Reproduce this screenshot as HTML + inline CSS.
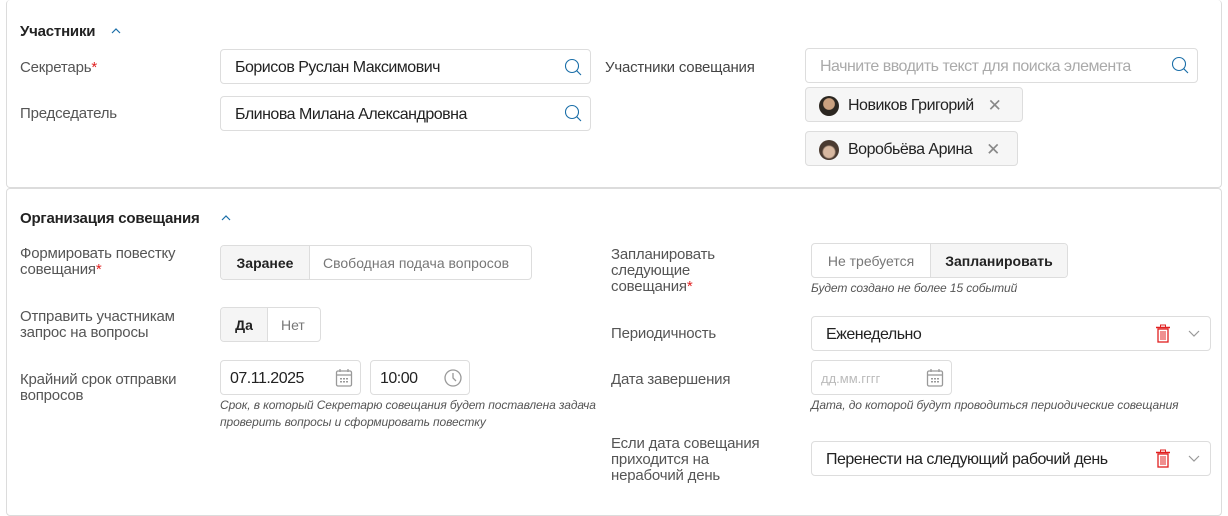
<!DOCTYPE html><html><head><meta charset="utf-8"><style>
*{box-sizing:border-box}body{margin:0;width:1228px;height:516px;background:#fff;font-family:"Liberation Sans",sans-serif;color:#333;position:relative;overflow:hidden}
.p{position:absolute;border:1px solid #dcdcdc;border-radius:4px;background:#fff}
.a{position:absolute;white-space:nowrap}
.l{font-size:15px;color:#555;line-height:16px;letter-spacing:-0.2px}
.h{font-size:15px;font-weight:bold;color:#222;letter-spacing:-0.2px}
.in{position:absolute;border:1px solid #ddd;border-radius:4px;background:#fff;font-size:16px;color:#222;padding-left:14px;padding-top:2px;display:flex;align-items:center;letter-spacing:-0.5px}
.hint{font-size:12px;font-style:italic;color:#555;line-height:17px;letter-spacing:-0.1px}
.seg{position:absolute;border:1px solid #ddd;border-radius:4px;display:flex;font-size:14px;overflow:hidden}
.seg div{display:flex;align-items:center;padding:0 13px;color:#777}
.seg .on{background:#f5f5f5;color:#222;font-weight:bold}
.r{color:#e02020}
.ic{position:absolute}
</style></head><body>
<div class="p" style="left:6px;top:0;width:1216px;height:188px;border-top:none"></div>
<div class="p" style="left:6px;top:188px;width:1216px;height:328px"></div>

<div class="a h" style="left:20px;top:23px">Участники</div>
<svg class="ic" style="left:110px;top:27px" width="12" height="8"><polyline points="2,6 6,2 10,6" fill="none" stroke="#1a6ea8" stroke-width="1.2"/></svg>
<div class="a l" style="left:20px;top:60px">Секретарь<span class="r">*</span></div>
<div class="a l" style="left:20px;top:106px">Председатель</div>
<div class="in" style="left:220px;top:49px;width:371px;height:35px">Борисов Руслан Максимович</div>
<div class="in" style="left:220px;top:96px;width:371px;height:35px">Блинова Милана Александровна</div>
<svg class="ic" style="left:564px;top:58px" width="20" height="20"><circle cx="8" cy="8" r="6.5" fill="none" stroke="#1a6ea8" stroke-width="1.1"/><line x1="12.7" y1="12.7" x2="17" y2="17" stroke="#1a6ea8" stroke-width="1.1"/></svg>
<svg class="ic" style="left:564px;top:104px" width="20" height="20"><circle cx="8" cy="8" r="6.5" fill="none" stroke="#1a6ea8" stroke-width="1.1"/><line x1="12.7" y1="12.7" x2="17" y2="17" stroke="#1a6ea8" stroke-width="1.1"/></svg>

<div class="a l" style="left:605px;top:60px;color:#444">Участники совещания</div>
<div class="in" style="left:805px;top:48px;width:393px;height:35px;color:#aaa">Начните вводить текст для поиска элемента</div>
<svg class="ic" style="left:1171px;top:56px" width="20" height="20"><circle cx="8" cy="8" r="6.5" fill="none" stroke="#1a6ea8" stroke-width="1.1"/><line x1="12.7" y1="12.7" x2="17" y2="17" stroke="#1a6ea8" stroke-width="1.1"/></svg>
<div class="in" style="left:805px;top:87px;width:218px;height:35px;background:#f6f6f6;padding-left:13px"><span style="width:20px;height:20px;border-radius:50%;background:radial-gradient(circle at 50% 40%,#c9a07f 35%,#2b2620 40%);margin-right:9px"></span>Новиков Григорий<span style="margin-left:14px;color:#888;font-size:17px">✕</span></div>
<div class="in" style="left:805px;top:131px;width:213px;height:35px;background:#f6f6f6;padding-left:13px"><span style="width:20px;height:20px;border-radius:50%;background:radial-gradient(circle at 50% 60%,#d8b8a0 35%,#4a3a30 45%);margin-right:9px"></span>Воробьёва Арина<span style="margin-left:14px;color:#888;font-size:17px">✕</span></div>

<div class="a h" style="left:20px;top:210px">Организация совещания</div>
<svg class="ic" style="left:220px;top:214px" width="12" height="8"><polyline points="2,6 6,2 10,6" fill="none" stroke="#1a6ea8" stroke-width="1.2"/></svg>
<div class="a l" style="left:20px;top:246px">Формировать повестку<br>совещания<span class="r">*</span></div>
<div class="seg" style="left:220px;top:245px;width:312px;height:35px"><div class="on" style="border-right:1px solid #ddd;width:89px;justify-content:center">Заранее</div><div>Свободная подача вопросов</div></div>
<div class="a l" style="left:20px;top:309px">Отправить участникам<br>запрос на вопросы</div>
<div class="seg" style="left:220px;top:307px;width:101px;height:35px"><div class="on" style="border-right:1px solid #ddd;width:47px;justify-content:center">Да</div><div>Нет</div></div>
<div class="a l" style="left:20px;top:372px">Крайний срок отправки<br>вопросов</div>
<div class="in" style="left:220px;top:360px;width:141px;height:35px;padding-left:9px">07.11.2025</div>
<svg class="ic" style="left:335px;top:368px" width="18" height="20"><rect x="1.5" y="3" width="15" height="15" rx="1.5" fill="none" stroke="#999" stroke-width="1.3"/><line x1="1.5" y1="7" x2="16.5" y2="7" stroke="#999" stroke-width="1.3"/><line x1="5" y1="1" x2="5" y2="4" stroke="#999" stroke-width="1.3"/><line x1="13" y1="1" x2="13" y2="4" stroke="#999" stroke-width="1.3"/><g fill="#999"><rect x="5" y="10" width="2" height="1.5"/><rect x="8" y="10" width="2" height="1.5"/><rect x="11" y="10" width="2" height="1.5"/><rect x="5" y="13" width="2" height="1.5"/><rect x="8" y="13" width="2" height="1.5"/><rect x="11" y="13" width="2" height="1.5"/></g></svg>
<div class="in" style="left:370px;top:360px;width:100px;height:35px;padding-left:9px">10:00</div>
<svg class="ic" style="left:443px;top:368px" width="20" height="20"><circle cx="10" cy="10" r="8" fill="none" stroke="#999" stroke-width="1.3"/><polyline points="10,5 10,10 13,13" fill="none" stroke="#999" stroke-width="1.3"/></svg>
<div class="a hint" style="left:220px;top:397px">Срок, в который Секретарю совещания будет поставлена задача<br>проверить вопросы и сформировать повестку</div>

<div class="a l" style="left:611px;top:247px">Запланировать<br>следующие<br>совещания<span class="r">*</span></div>
<div class="seg" style="left:811px;top:243px;width:257px;height:35px"><div style="border-right:1px solid #ddd;width:119px;justify-content:center">Не требуется</div><div class="on" style="flex:1;justify-content:center">Запланировать</div></div>
<div class="a hint" style="left:811px;top:280px">Будет создано не более 15 событий</div>
<div class="a l" style="left:611px;top:326px">Периодичность</div>
<div class="in" style="left:811px;top:316px;width:400px;height:35px">Еженедельно</div>
<svg class="ic" style="left:1155px;top:324px" width="16" height="19"><rect x="3" y="5" width="10" height="13" fill="none" stroke="#e02020" stroke-width="1.3"/><line x1="1" y1="3.5" x2="15" y2="3.5" stroke="#e02020" stroke-width="1.5"/><rect x="5.5" y="1" width="5" height="2.5" fill="none" stroke="#e02020" stroke-width="1"/><line x1="6" y1="7" x2="6" y2="16" stroke="#e02020"/><line x1="8" y1="7" x2="8" y2="16" stroke="#e02020"/><line x1="10" y1="7" x2="10" y2="16" stroke="#e02020"/></svg>
<svg class="ic" style="left:1188px;top:330px" width="12" height="8"><polyline points="1,1 6,6 11,1" fill="none" stroke="#999" stroke-width="1.2"/></svg>
<div class="a l" style="left:611px;top:372px">Дата завершения</div>
<div class="in" style="left:811px;top:360px;width:141px;height:35px;padding-left:9px;color:#bbb;font-size:13px;letter-spacing:0">дд.мм.гггг</div>
<svg class="ic" style="left:926px;top:368px" width="18" height="20"><rect x="1.5" y="3" width="15" height="15" rx="1.5" fill="none" stroke="#999" stroke-width="1.3"/><line x1="1.5" y1="7" x2="16.5" y2="7" stroke="#999" stroke-width="1.3"/><line x1="5" y1="1" x2="5" y2="4" stroke="#999" stroke-width="1.3"/><line x1="13" y1="1" x2="13" y2="4" stroke="#999" stroke-width="1.3"/><g fill="#999"><rect x="5" y="10" width="2" height="1.5"/><rect x="8" y="10" width="2" height="1.5"/><rect x="11" y="10" width="2" height="1.5"/><rect x="5" y="13" width="2" height="1.5"/><rect x="8" y="13" width="2" height="1.5"/><rect x="11" y="13" width="2" height="1.5"/></g></svg>
<div class="a hint" style="left:811px;top:397px">Дата, до которой будут проводиться периодические совещания</div>
<div class="a l" style="left:611px;top:436px">Если дата совещания<br>приходится на<br>нерабочий день</div>
<div class="in" style="left:811px;top:441px;width:400px;height:35px">Перенести на следующий рабочий день</div>
<svg class="ic" style="left:1155px;top:449px" width="16" height="19"><rect x="3" y="5" width="10" height="13" fill="none" stroke="#e02020" stroke-width="1.3"/><line x1="1" y1="3.5" x2="15" y2="3.5" stroke="#e02020" stroke-width="1.5"/><rect x="5.5" y="1" width="5" height="2.5" fill="none" stroke="#e02020" stroke-width="1"/><line x1="6" y1="7" x2="6" y2="16" stroke="#e02020"/><line x1="8" y1="7" x2="8" y2="16" stroke="#e02020"/><line x1="10" y1="7" x2="10" y2="16" stroke="#e02020"/></svg>
<svg class="ic" style="left:1188px;top:455px" width="12" height="8"><polyline points="1,1 6,6 11,1" fill="none" stroke="#999" stroke-width="1.2"/></svg>
</body></html>
